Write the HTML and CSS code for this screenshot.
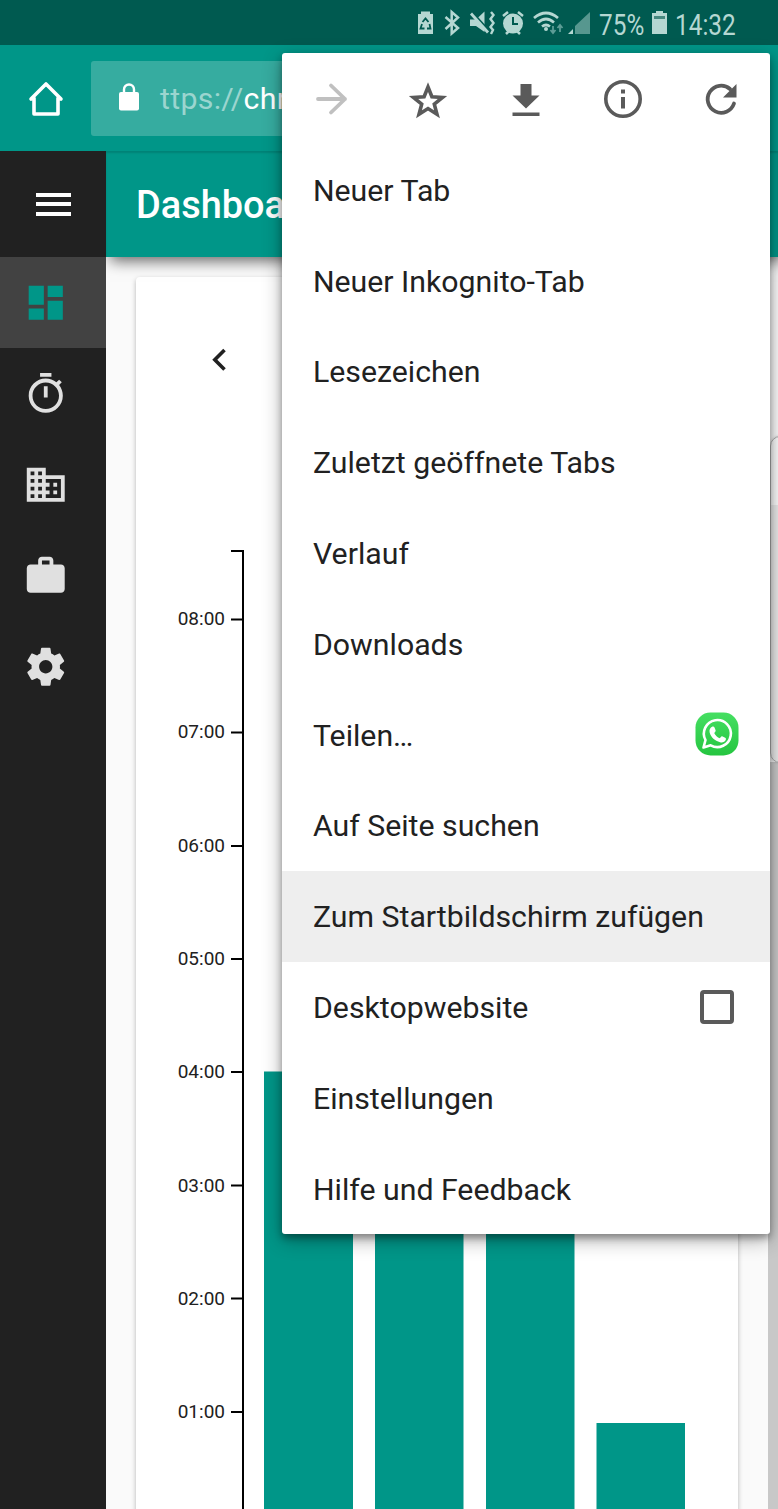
FILE: index.html
```html
<!DOCTYPE html>
<html lang="de">
<head>
<meta charset="utf-8">
<title>Dashboard</title>
<link rel="stylesheet" href="styles.css">
</head>
<body>
<div class="screen">
  <header class="status">
    <svg class="status-icons" width="192" height="45" viewBox="0 0 192 45" fill="#b5d7d2">
      <path d="M18 14h3v-2.500h9V14h3v20h-15z"/>
      <path d="M22.500 22l3-3.500 3 3.500M29.500 24l1 4.500h-3.500M24.500 28.500h-4l1.500-4.500" fill="none" stroke="#005a50" stroke-width="1.800"/>
      <path d="M45.500 17l12.500 11-6.300 5.500V12L58 17.500 45.500 29" fill="none" stroke="#b5d7d2" stroke-width="2.500"/>
      <path d="M70 19.500h6l8.500-8v20.500l-8.500-6h-6z"/>
      <path d="M72 12l15.500 17" stroke="#005a50" stroke-width="2"/><path d="M71 13.500l17 19" stroke="#b5d7d2" stroke-width="2.800"/>
      <path d="M91 12l2.500 3-3 4 3 4-3 4 2.500 3-2 4" fill="none" stroke="#b5d7d2" stroke-width="2.400"/>
      <circle cx="113" cy="23.500" r="10"/>
      <path d="M103 16l5-4M123 16l-5-4M106 34l3-3M120 34l-3-3" stroke="#b5d7d2" stroke-width="2.500"/>
      <path d="M113 17v7h5" fill="none" stroke="#005a50" stroke-width="2"/>
      <g fill="none" stroke="#b5d7d2" stroke-width="2.700"><path d="M134 18q12-10 24 0M138 22.500q8-7 16 0M142 26.500q4-3 8 0"/></g>
      <circle cx="146" cy="29" r="2"/>
      <path d="M153 26v6m-2.500-2l2.500 3 2.500-3M160 32v-6m-2.500 2l2.500-3 2.500 3" fill="none" stroke="#5d9d96" stroke-width="1.800"/>
      <path d="M173 29v5h-5z"/><path d="M190 12v22h-15V26z" fill="#57978f"/>
    </svg>
    <span class="percent">75%</span>
    <svg class="battery" width="15" height="24" viewBox="0 0 15 24"><path d="M0 2h4V0h7v2h4v21H0z" fill="#b5d7d2"/><path d="M2 5h11v3H2z" fill="#46887f"/></svg>
    <span class="clock">14:32</span>
  </header>

  <div class="browser-bar">
    <svg class="home" width="36" height="38" viewBox="0 0 36 38" fill="none" stroke="#fff" stroke-width="3.600" stroke-linecap="round" stroke-linejoin="round"><path d="M3 19L18 4l15 15M6 18v16h24V18"/></svg>
    <div class="address">
      <svg class="lock" width="22" height="28" viewBox="0 0 22 28"><rect x="1" y="9" width="20" height="18.500" rx="2" fill="#fff"/><path d="M6 10V6.500a5 5 0 0 1 10 0V10" fill="none" stroke="#fff" stroke-width="2.400"/></svg>
      <span class="url"><span class="scheme">ttps://</span>chrome</span>
    </div>
  </div>

  <div class="app">
    <nav class="sidebar">
      <div class="burger"><i></i><i></i><i></i></div>
      <div class="nav-item active"><svg viewBox="0 0 24 24"><path d="M3 13h8V3H3v10zm0 8h8v-6H3v6zm10 0h8V11h-8v10zm0-18v6h8V3h-8z"/></svg></div>
      <div class="nav-item"><svg viewBox="0 0 24 24"><path d="M15 1H9v2h6V1zm-4 13h2V8h-2v6zm8.030-6.610l1.420-1.420c-.43-.51-.9-.99-1.410-1.410l-1.420 1.420C16.070 4.740 14.120 4 12 4c-4.970 0-9 4.030-9 9s4.020 9 9 9 9-4.030 9-9c0-2.120-.74-4.070-1.970-5.610zM12 20c-3.870 0-7-3.130-7-7s3.130-7 7-7 7 3.130 7 7-3.130 7-7 7z"/></svg></div>
      <div class="nav-item"><svg viewBox="0 0 24 24"><path d="M12 7V3H2v18h20V7H12zM6 19H4v-2h2v2zm0-4H4v-2h2v2zm0-4H4V9h2v2zm0-4H4V5h2v2zm4 12H8v-2h2v2zm0-4H8v-2h2v2zm0-4H8V9h2v2zm0-4H8V5h2v2zm10 12h-8v-2h2v-2h-2v-2h2v-2h-2V9h8v10zm-2-8h-2v2h2v-2zm0 4h-2v2h2v-2z"/></svg></div>
      <div class="nav-item"><svg viewBox="0 0 24 24"><path fill-rule="evenodd" d="M20 6h-4V4c0-1.110-.89-2-2-2h-4c-1.110 0-2 .89-2 2v2H4c-1.110 0-2 .89-2 2v11c0 1.110.89 2 2 2h16c1.110 0 2-.89 2-2V8c0-1.110-.89-2-2-2zm-6 0h-4V4h4v2z"/></svg></div>
      <div class="nav-item"><svg viewBox="0 0 24 24"><path d="M19.430 12.980c.04-.32.070-.64.070-.98s-.03-.66-.07-.98l2.110-1.650c.19-.15.24-.42.12-.64l-2-3.460c-.12-.22-.39-.3-.61-.22l-2.490 1c-.52-.4-1.080-.73-1.690-.98l-.38-2.650C14.460 2.180 14.250 2 14 2h-4c-.25 0-.46.18-.49.42l-.38 2.650c-.61.25-1.170.59-1.690.98l-2.490-1c-.23-.09-.49 0-.61.22l-2 3.460c-.13.22-.07.49.12.64l2.110 1.650c-.04.32-.07.65-.07.98s.03.66.07.98l-2.110 1.650c-.19.15-.24.42-.12.64l2 3.460c.12.22.39.3.61.22l2.490-1c.52.4 1.080.73 1.690.98l.38 2.650c.03.24.24.42.49.42h4c.25 0 .46-.18.49-.42l.38-2.650c.61-.25 1.170-.59 1.690-.98l2.490 1c.23.09.49 0 .61-.22l2-3.460c.12-.22.07-.49-.12-.64l-2.110-1.650zM12 15.500c-1.930 0-3.500-1.570-3.500-3.500s1.570-3.500 3.500-3.500 3.500 1.570 3.500 3.500-1.570 3.500-3.500 3.500z"/></svg></div>
    </nav>
    <main class="main">
      <div class="titlebar">Dashboard</div>
      <section class="card">
        <svg class="chart" width="602" height="1232" viewBox="136 277 602 1232">
          <path d="M224.500 350l-9.700 9.700 9.700 9.700" fill="none" stroke="#212121" stroke-width="3.600"/>
          <g fill="#009688"><path d="M264 1071.500h89V1509h-89zM375 1071.500h88.500V1509H375zM486 1071.500h88.500V1509H486zM596.500 1423H685v86h-88.500z"/></g>
          <path d="M231 551h12v958M231 619.500h12M231 732.500h12M231 846h12M231 959h12M231 1072h12M231 1185.500h12M231 1298.500h12M231 1412h12" fill="none" stroke="#000" stroke-width="2"/>
          <g class="labels" text-anchor="end"><text x="225" y="625">08:00</text><text x="225" y="738">07:00</text><text x="225" y="851.500">06:00</text><text x="225" y="964.500">05:00</text><text x="225" y="1077.500">04:00</text><text x="225" y="1191.500">03:00</text><text x="225" y="1304.500">02:00</text><text x="225" y="1417.500">01:00</text></g>
        </svg>
      </section>
    </main>
  </div>

  <div class="scrollbar"></div>
  <div class="edge-handle"></div>

  <div class="menu">
    <div class="menu-tools">
      <svg viewBox="0 0 48 48" fill="none" stroke="#c0c0c0" stroke-width="3.800" stroke-linecap="round" stroke-linejoin="round"><path d="M11 24h27M24 10.500L38 24 24 37.500"/></svg>
      <svg viewBox="0 0 48 48" fill="none" stroke="#5a5a5a" stroke-width="3.600"><path d="M24 12l3.900 9.700 10.600.8-8.200 6.600 2.700 10.200-9-5.700-9 5.700 2.700-10.200L9.500 22.500l10.600-.8z"/></svg>
      <svg viewBox="0 0 48 48" fill="#5a5a5a"><path d="M18.500 9h11v11.500h8L24 33.500 10.500 20.500h8zM10.500 37.500h27V41h-27z"/></svg>
      <svg viewBox="0 0 48 48"><circle cx="24" cy="24" r="17.200" fill="none" stroke="#5a5a5a" stroke-width="3.600"/><path d="M22 14.500h4v4h-4zM22 22h4v11.500h-4z" fill="#5a5a5a"/></svg>
      <svg viewBox="0 0 48 48"><path d="M37 28.500A13.500 13.500 0 1 1 33 14" fill="none" stroke="#5a5a5a" stroke-width="3.800" stroke-linecap="round"/><path d="M39.500 9v13.500H26z" fill="#5a5a5a"/></svg>
    </div>
    <div class="item">Neuer Tab</div>
    <div class="item">Neuer Inkognito-Tab</div>
    <div class="item">Lesezeichen</div>
    <div class="item">Zuletzt geöffnete Tabs</div>
    <div class="item">Verlauf</div>
    <div class="item">Downloads</div>
    <div class="item"><span>Teilen…</span>
      <svg class="whatsapp" width="44" height="44" viewBox="0 0 44 44"><defs><linearGradient id="wa" x1="0" y1="0" x2="0" y2="1"><stop offset="0" stop-color="#46df62"/><stop offset="1" stop-color="#25c540"/></linearGradient></defs><rect x=".5" y=".5" width="43" height="43" rx="15" fill="url(#wa)"/><path d="M8.500 35.500l2-7.500a13.500 13.500 0 1 1 5.200 5.300z" fill="none" stroke="#fff" stroke-width="2.600" stroke-linejoin="round"/><path d="M17.500 14.500c1-.2 1.700.1 2 1l1.100 2.700c.3.800-.3 1.600-1.400 2.700 1.300 2.600 3.100 4.300 5.700 5.300 1.300-1.700 1.800-2.200 2.700-1.800l2.600 1.300c.9.500.9 1.100.5 2.200-.9 2.100-3.200 2.900-5.600 2.300-5.400-1.500-8.900-4.900-10.400-9.500-.8-2.600.4-5.300 2.800-6.200z" fill="#fff"/></svg>
    </div>
    <div class="item">Auf Seite suchen</div>
    <div class="item selected">Zum Startbildschirm zufügen</div>
    <div class="item"><span>Desktopwebsite</span><span class="checkbox"></span></div>
    <div class="item">Einstellungen</div>
    <div class="item">Hilfe und Feedback</div>
  </div>
</div>
</body>
</html>
```

FILE: styles.css
```css
* { box-sizing: border-box; }
body { margin: 0; font-family: Roboto, sans-serif; color: #212121; }
.screen { position: relative; width: 778px; height: 1509px; overflow: hidden; background: #fafafa; }

.status { display: flex; align-items: center; height: 45px; padding-left: 400px; background: #005a50; color: #b5d7d2; font-size: 29px; white-space: nowrap; }
.status-icons { flex: none; }
.percent, .clock { display: block; transform-origin: left center; transform: scaleX(.84); padding-top: 4px; }
.percent { width: 44px; margin-left: 7px; }
.battery { flex: none; margin-left: 9px; }
.clock { margin-left: 8px; }

.browser-bar { display: flex; align-items: center; height: 106px; padding-left: 28px; background: #009688; }
.home { flex: none; margin-top: 1px; }
.address { display: flex; align-items: center; flex: 1; height: 75px; margin-left: 27px; margin-right: 20px; padding-left: 27px; border-radius: 3px; background: #36aca0; }
.lock { margin-top: -3px; }
.url { margin-left: 20px; color: #fff; font-size: 30.300px; letter-spacing: .3px; }
.scheme { color: #9bd5cf; }

.app { display: flex; height: 1358px; }
.sidebar { width: 106px; background: #212121; flex: none; }
.burger { display: flex; flex-direction: column; align-items: center; justify-content: center; gap: 5.500px; height: 106px; }
.burger i { width: 35px; height: 4px; background: #fff; }
.nav-item { display: flex; align-items: center; height: 91px; padding-left: 22.500px; }
.nav-item svg { width: 45.500px; height: 45.500px; fill: #e0e0e0; }
.nav-item.active { background: #424242; }
.nav-item.active svg { fill: #009688; }

.main { flex: 1; min-width: 0; }
.titlebar { position: relative; height: 106px; padding-left: 30px; line-height: 108px; background: #009688; color: #fff; font-size: 37.900px; font-weight: 500; box-shadow: inset 0 2px 2px rgba(0,0,0,.13), 4px 4px 14px rgba(0,0,0,.6); clip-path: inset(0 0 -30px 0); }
.card { width: 602px; height: 1250px; margin: 20px 0 0 30px; border-radius: 4px; background: #fff; box-shadow: 0 2px 5px rgba(0,0,0,.28); }
.chart { display: block; }
.labels { font-size: 19px; fill: #212121; }

.scrollbar { position: absolute; left: 768px; top: 762px; width: 10px; height: 747px; background: #c8c8c8; }
.edge-handle { position: absolute; left: 770px; top: 436px; width: 20px; height: 327px; border: 1px solid #aaa; border-radius: 10px; background: linear-gradient(#fafafa 68px, #e9e9e9 68px); box-shadow: 0 0 3px rgba(0,0,0,.2); }

.menu { position: absolute; left: 282px; top: 53px; width: 488px; height: 1180.500px; border-radius: 3px; background: #fff; box-shadow: 0 4px 7px rgba(0,0,0,.32), 0 6px 20px rgba(0,0,0,.32); }
.menu-tools { display: flex; align-items: center; justify-content: space-between; height: 91.500px; padding: 0 25px 0 24.500px; }
.menu-tools svg { width: 48px; height: 48px; }
.item { display: flex; align-items: center; justify-content: space-between; height: 90.800px; padding: 1px 31px 0 31px; font-size: 30.250px; }
.selected { background: #eee; }
.checkbox { width: 34px; height: 34px; margin-right: 5px; margin-top: -2px; border: 4px solid #5a5a5a; border-radius: 4px; }
.whatsapp { margin-top: -3px; }
```
